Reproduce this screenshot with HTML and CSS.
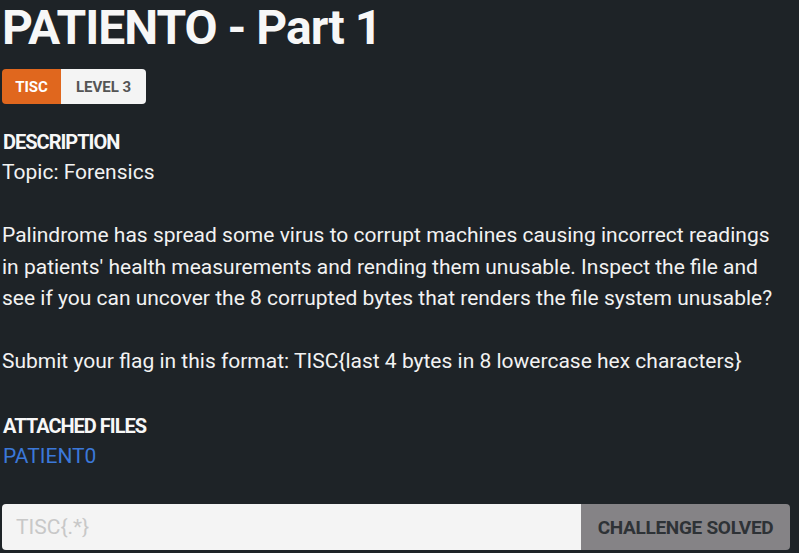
FILE: index.html
```html
<!DOCTYPE html>
<html>
<head>
<meta charset="utf-8">
<link rel="stylesheet" href="styles.css">
</head>
<body>
<div class="page">
  <h1 class="title">PATIENTO - Part 1</h1>
  <div class="badges"><span class="badge cat">TISC</span><span class="badge lvl">LEVEL 3</span></div>
  <h3 class="section">DESCRIPTION</h3>
  <div class="desc">
    <p>Topic: Forensics</p>
    <p>Palindrome has spread some virus to corrupt machines causing incorrect readings in patients' health measurements and rending them unusable. Inspect the file and see if you can uncover the 8 corrupted bytes that renders the file system unusable?</p>
    <p>Submit your flag in this format: TISC{last 4 bytes in 8 lowercase hex characters}</p>
  </div>
  <h3 class="section files-h">ATTACHED FILES</h3>
  <a class="file" href="#">PATIENT0</a>
  <form class="submit">
    <input class="flag" type="text" placeholder="TISC{.*}">
    <button class="solved" type="button">CHALLENGE SOLVED</button>
  </form>
</div>
</body>
</html>
```
FILE: styles.css
```css
html, body { margin: 0; padding: 0; }
body {
  background: #1e2327;
  color: #f4f4f4;
  font-family: Roboto, "Liberation Sans", sans-serif;
  width: 799px;
  height: 553px;
  overflow: hidden;
}
.page { padding: 0 9px 0 2px; display: flex; flex-direction: column; align-items: flex-start; }
.title {
  margin: 0;
  font-family: Roboto, sans-serif;
  font-weight: 700;
  font-size: 48px;
  line-height: 56px;
  letter-spacing: -1px;
  color: #f7f7f7;
}
.badges { display: flex; margin-top: 13px; }
.badge {
  height: 35px;
  display: flex;
  align-items: center;
  justify-content: center;
  font-family: Roboto, sans-serif;
  font-weight: 700;
  font-size: 15px;
}
.cat { background: #e0671e; color: #fff; width: 59px; border-radius: 4px 0 0 4px; }
.lvl { background: #f4f4f4; color: #555; width: 85px; border-radius: 0 4px 4px 0; }
.section {
  margin: 26px 0 0 1px;
  font-family: Roboto, sans-serif;
  font-weight: 700;
  font-size: 20px;
  line-height: 24px;
  letter-spacing: -1px;
  color: #f7f7f7;
}
.desc { margin-top: 3px; font-size: 21px; line-height: 31.5px; letter-spacing: 0; color: #f2f2f2; }
.desc p { margin: 0 0 31.5px 0; }
.desc p:last-child { margin-bottom: 0; }
.files-h { margin-top: 36px; }
.file { color: #3b78d8; text-decoration: none; font-size: 21px; line-height: 24px; margin-top: 6.5px; margin-left: 1px; }
.submit { display: flex; margin-top: 36px; height: 46px; width: 788px; }
.flag {
  flex: 1;
  border: none;
  background: #f4f4f4;
  border-radius: 4px 0 0 4px;
  font-family: Roboto, sans-serif;
  font-size: 21px;
  padding: 0 14px;
  outline: none;
}
.flag::placeholder { color: #c8c8c8; }
.solved {
  width: 209px;
  border: none;
  background: #858386;
  color: #2e3236;
  border-radius: 0 4px 4px 0;
  font-family: Roboto, sans-serif;
  font-weight: 700;
  font-size: 19px;
  letter-spacing: -0.3px;
  padding: 0;
}
```
